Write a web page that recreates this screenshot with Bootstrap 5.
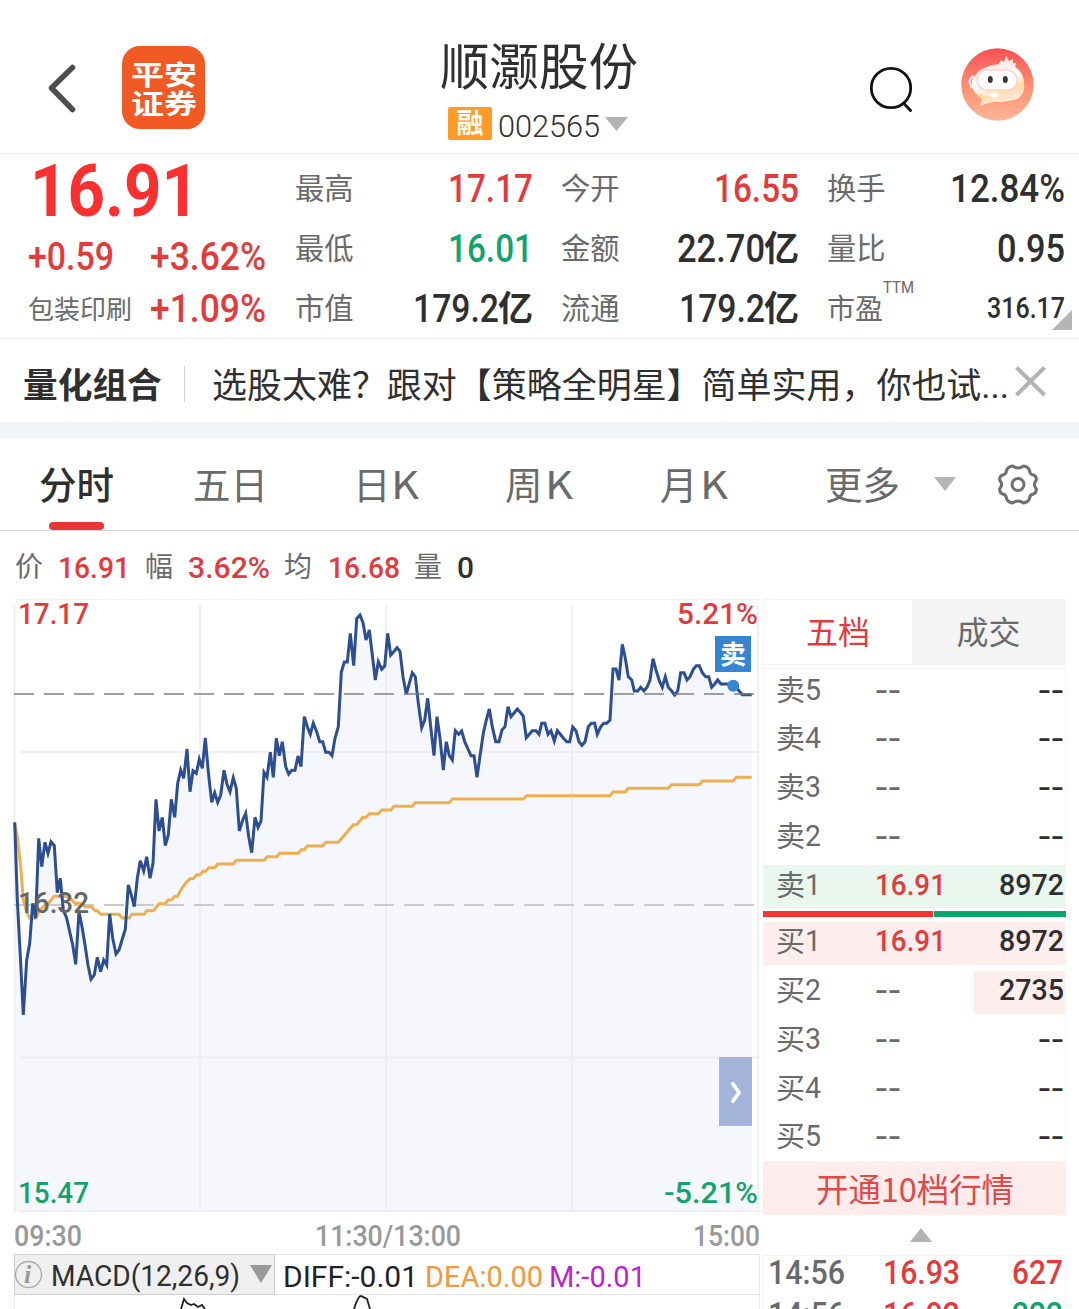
<!DOCTYPE html>
<html lang="zh-CN">
<head>
<meta charset="utf-8">
<meta name="viewport" content="width=device-width, initial-scale=1">
<title>顺灏股份 002565</title>
<link href="https://cdn.jsdelivr.net/npm/bootstrap@5.3.0/dist/css/bootstrap.min.css" rel="stylesheet">
<style>
:root{--up:#e23b3b;--down:#12a46c;--ink:#2f2f2f;--dim:#6a6a6a}
body{width:1079px;height:1309px;overflow:hidden;background:#fff;color:var(--ink);font-family:Roboto,"Noto Sans CJK SC",sans-serif;line-height:1;white-space:nowrap}
svg{display:block;flex:none}
.fit{display:inline-block;transform-origin:0 50%;font-weight:500;flex:none}
.w4{font-weight:400}
.w3{font-weight:300}
.w7{font-weight:700}
.up{color:var(--up)}.down{color:var(--down)}.dim{color:var(--dim)}
.cjk{font-family:"Noto Sans CJK SC",sans-serif}
.topbar{height:154px;border-bottom:1px solid #ececec}
.applogo{width:83px;height:83px;border-radius:18px;background:#f15a24;color:#fff;font:700 27px/29px "Noto Sans CJK SC",sans-serif;margin:46px 0 0 47px;padding:13px 0 0 9px}
.titlebox{width:300px;margin-left:184px;padding-top:37px}
.stockname{font-size:49.500px;line-height:54px}
.coderow{padding:13px 0 0 59px}
.code{font-family:Roboto;font-size:32px;line-height:33px;padding:6px 0 0 2px}
.marginbadge{width:44px;height:33px;border-radius:2px;background:#ff9b26;color:#fff;font-size:27px;line-height:30px;font-weight:700;text-align:center}
.quote{height:185px;border-bottom:1px solid #ececec}
.quote-left{width:295px;padding-left:28px}
.q1{height:75px}.q2{height:54px}.q3{height:51px}
.pair{width:266px;padding-right:28px;height:60px}
.pair.last{width:252px;padding-right:14px}
.lbl{font-size:29.300px;color:var(--dim);padding-bottom:2px}
.yi{font-size:35px;font-weight:700;padding-bottom:5px;margin-left:-1px}
.ttm{font-family:Roboto;font-size:17px;line-height:17px;margin-top:-14px}
.n38{font-size:38px;padding-top:1px}.n30{font-size:30px}.n34{font-size:34px}
.corner{width:20px;height:20px;right:7px;bottom:8px;background:#b5b5b5;clip-path:polygon(100% 0,100% 100%,0 100%)}
.promo{height:83px;padding-left:23px}
.promo-sep{width:1px;height:36px;background:#d0d0d0;margin:7px 27px 0 22px}
.gapband{height:17px;background:#f2f4f9}
.periods{height:92px;border-bottom:1px solid #d9d9d9;font-size:37.500px;color:var(--dim)}
.periods>.slot{height:91px;padding-bottom:3px}
.active-line{width:55px;height:8px;border-radius:4px;background:#e83535;left:49px;bottom:0}
.infoline{height:68px;padding:5px 0 0 15px;font-size:28px}
.infoline>.nm{padding-bottom:5px}
.infoline>.num{font-family:Roboto}
.leftcol{width:760px}
.chart{overflow:visible;margin-left:14px}
.axis{height:40px;padding:4px 0 0 14px;color:#999}
.macd{margin-left:14px;width:746px;height:41px;border:1px solid #e6e6e6}
.macd-name{width:261px;height:41px;margin:-1px 0 0 -1px;background:#efefef;border:1px solid #cfcfcf}
.book{width:303px;margin:68px 0 0 3px}
.booktabs{height:66px;border:1px solid #f3f3f3;font-size:32px}
.booktabs span{padding-bottom:4px}
.booktabs .tab-b{width:153px;background:#f4f4f4}
.ladder{border:1px solid #f5f5f5;border-top-color:#f0f0f0;margin-top:3px;height:494px;padding-top:1px}
.lv{height:43px;margin-bottom:5.75px;padding:0 1px 4px 12px}
.lv .nm{width:99px;font-size:29px;color:var(--dim)}
.lv .nm .cjk{padding-bottom:3px}
.lv .vol{margin-left:auto}
.lv .none{padding-top:2px}
.lv.s1{background:#eaf7ef}.lv.b1{background:#fdeeed}
.lv.b2{background:linear-gradient(90deg,transparent 210px,#fdeeed 210px)}
.balance{height:6px;gap:1px;margin:-3px -1px 5px}
.balance i{background:#f53434}.balance i+i{background:#08a66a}
.open10{height:53px;background:#fdeceb;color:#dd4a48;font-size:33px}
.ticks{height:54px;border:1px solid #f3f3f3;border-bottom:0;overflow:hidden;padding:0 2px 0 4px}
.ticks>div{height:42px;padding-bottom:10px}
</style>
<script src="https://cdn.jsdelivr.net/npm/bootstrap@5.3.0/dist/js/bootstrap.bundle.min.js"></script>
</head>
<body>
<header class="topbar d-flex">
  <svg width="75" height="153" viewBox="0 0 75 153" style="overflow:visible" fill="none" stroke="#4d4d4d" stroke-width="5.500" stroke-linecap="round" stroke-linejoin="round"><path d="M72.500 67.500 51.500 88 72.500 109.500"/></svg>
  <div class="applogo"><div><span class="fit w7" data-w="66">平安</span></div><div><span class="fit w7" data-w="66">证券</span></div></div>
  <div class="titlebox cjk">
    <div class="stockname text-center">顺灏股份</div>
    <div class="coderow d-flex align-items-center">
      <span class="marginbadge">融</span>
      <span class="fit w3 ms-1 code" data-w="104">002565</span>
      <svg class="ms-1" width="24" height="33" fill="#b3b3b3"><path d="M1 10H24L12.500 24Z"/></svg>
    </div>
  </div>
  <svg width="388" height="153" viewBox="689 0 388 153" fill="none">
    <defs>
      <linearGradient id="av" x2="0" y2="1"><stop stop-color="#f94f53"/><stop offset=".5" stop-color="#fb8e70"/><stop offset="1" stop-color="#ffb697"/></linearGradient>
      <linearGradient id="hd" x2=".4" y2="1"><stop stop-color="#ffe0d8"/><stop offset=".5" stop-color="#fff"/><stop offset=".75" stop-color="#ffdca5"/><stop offset="1" stop-color="#ffe9e2"/></linearGradient>
    </defs>
    <circle cx="891" cy="88" r="19.700" stroke="#111" stroke-width="2.800"/>
    <path d="M903.500 103 910.500 110.500" stroke="#111" stroke-width="3" stroke-linecap="round"/>
    <circle cx="997.500" cy="84.500" r="36.200" fill="url(#av)"/>
    <path d="M998 65 1001 60 1004 62 1006 56 1009 61 1013 59 1013 63 1016 63 1015 68Z" fill="#ffeae4"/>
    <path d="M978 72Q987 64 1004 64Q1019 65 1023 77Q1027 91 1019 98Q1012 102 994 102Q986 103 980 106L982 99Q970 91 972 80Z" fill="url(#hd)"/>
    <rect x="977" y="70" width="40" height="20" rx="10" fill="#fff" stroke="#ffd3ca" stroke-width="1.500"/>
    <ellipse cx="990.300" cy="79.500" rx="2.500" ry="3.600" fill="#3c3531"/><ellipse cx="1005.300" cy="79.500" rx="2.500" ry="3.600" fill="#3c3531"/>
    <path d="M974 76Q967 79 971 86Q978 94 993 95" stroke="#fff1eb" stroke-width="2.200"/>
    <rect x="990" y="92.500" width="9" height="5" rx="2.500" fill="#fff"/>
  </svg>
</header>

<section class="quote d-flex position-relative">
  <div class="quote-left">
    <div class="q1 d-flex align-items-center"><span class="fit" data-w="169" style="font-size:72px;font-weight:700;color:#f93030;margin-left:2px">16.91</span></div>
    <div class="q2 d-flex align-items-center up n38"><span class="fit" data-w="86">+0.59</span><span class="fit" data-w="116" style="margin-left:36px">+3.62%</span></div>
    <div class="q3 d-flex align-items-center up n38"><span class="dim cjk" style="font-size:26px;width:122px;padding-bottom:3px">包装印刷</span><span class="fit" data-w="116">+1.09%</span></div>
  </div>
  <div style="padding-top:4px">
    <div class="pair d-flex align-items-center justify-content-between"><span class="lbl cjk">最高</span><span class="fit n38 up" data-w="85">17.17</span></div>
    <div class="pair d-flex align-items-center justify-content-between"><span class="lbl cjk">最低</span><span class="fit n38 down" data-w="85">16.01</span></div>
    <div class="pair d-flex align-items-center justify-content-between"><span class="lbl cjk">市值</span><span class="d-flex align-items-center"><span class="fit n38" data-w="86">179.2</span><span class="cjk yi">亿</span></span></div>
  </div>
  <div style="padding-top:4px">
    <div class="pair d-flex align-items-center justify-content-between"><span class="lbl cjk">今开</span><span class="fit n38 up" data-w="85">16.55</span></div>
    <div class="pair d-flex align-items-center justify-content-between"><span class="lbl cjk">金额</span><span class="d-flex align-items-center"><span class="fit n38" data-w="88">22.70</span><span class="cjk yi">亿</span></span></div>
    <div class="pair d-flex align-items-center justify-content-between"><span class="lbl cjk">流通</span><span class="d-flex align-items-center"><span class="fit n38" data-w="86">179.2</span><span class="cjk yi">亿</span></span></div>
  </div>
  <div style="padding-top:4px">
    <div class="pair last d-flex align-items-center justify-content-between"><span class="lbl cjk">换手</span><span class="fit n38" data-w="115">12.84%</span></div>
    <div class="pair last d-flex align-items-center justify-content-between"><span class="lbl cjk">量比</span><span class="fit n38" data-w="68">0.95</span></div>
    <div class="pair last d-flex align-items-center justify-content-between"><span class="lbl cjk d-flex" style="font-size:28px">市盈<span class="fit w4 ttm" data-w="31">TTM</span></span><span class="fit n30" data-w="78">316.17</span></div>
  </div>
  <span class="corner position-absolute"></span>
</section>

<section class="promo d-flex align-items-center cjk">
  <b style="font-size:34.700px;padding-top:6px">量化组合</b><span class="promo-sep"></span>
  <span class="fit w4" data-w="797" style="font-size:35px;margin-top:8px">选股太难？跟对【策略全明星】简单实用，你也试<span style="font-family:Roboto">...</span></span>
  <svg class="ms-1" width="34" height="34" stroke="#b3b3b3" stroke-width="4"><path d="M3.500 3.500 31.500 31M31.500 3.500 3.500 31"/></svg>
</section>
<div class="gapband"></div>

<nav class="periods d-flex cjk position-relative">
  <span class="slot d-flex align-items-center" style="width:154px;padding-left:39px;color:var(--ink);font-weight:500">分时</span>
  <span class="slot d-flex align-items-center" style="width:160px;padding-left:39px">五日</span>
  <span class="slot d-flex align-items-center" style="width:152px;padding-left:39px">日<span class="fit w4" data-w="28">K</span></span>
  <span class="slot d-flex align-items-center" style="width:155px;padding-left:39px">周<span class="fit w4" data-w="28" style="margin-left:2px">K</span></span>
  <span class="slot d-flex align-items-center" style="width:203px;padding-left:39px">月<span class="fit w4" data-w="28" style="margin-left:2px">K</span></span>
  <span class="slot d-flex align-items-center" style="width:110px;padding-left:1px">更多</span>
  <svg width="64" height="91" fill="#b5b5b5"><path d="M0 38H22L11 52Z"/></svg>
  <svg width="40" height="91" viewBox="-20 -45.500 40 91" fill="none" stroke="#6f6f6f" stroke-width="3"><circle r="6"/><path stroke-linejoin="round" d="M-5.500-18.400Q0-14.600 5.500-18.400Q10.500-17.500 11.500-14Q11.700-10 15.500-9.500Q18.400-8.500 18.400-4.500Q14.500 0 18.400 4.500Q18.400 8.500 15.500 9.500Q11.700 10 11.500 14Q10.500 17.500 5.500 18.400Q0 14.600-5.500 18.400Q-10.500 17.500-11.500 14Q-11.700 10-15.500 9.500Q-18.400 8.500-18.400 4.500Q-14.500 0-18.400-4.500Q-18.400-8.500-15.500-9.500Q-11.700-10-11.500-14Q-10.500-17.500-5.500-18.400Z"/></svg>
  <span class="active-line position-absolute"></span>
</nav>

<main class="d-flex">
<div class="leftcol">
  <div class="infoline d-flex align-items-center cjk dim">
    <span class="nm" style="width:43px">价</span><span class="fit n30 up num" data-w="72">16.91</span>
    <span class="nm" style="width:58px;padding-left:15px">幅</span><span class="fit n30 up num" data-w="82">3.62%</span>
    <span class="nm" style="width:58px;padding-left:14px">均</span><span class="fit n30 up num" data-w="72">16.68</span>
    <span class="nm" style="width:57px;padding-left:14px">量</span><span class="fit n30 num" data-w="17" style="color:var(--ink)">0</span>
  </div>
  <svg class="chart" width="746" height="615" viewBox="14 599 746 615" font-family="Roboto" font-weight="500" font-size="30">
    <path id="area" fill="#f5f7fc"/>
    <path stroke="#e9eaef" stroke-opacity=".7" stroke-width="2" fill="none" d="M20 752H760M20 1057.500H760M20 1211H760M14.500 605V1212M200 605V1212M386 605V1212M572 605V1212M758 605V1212"/>
    <path stroke="#f3f3f3" d="M14 599.500H760"/>
    <path d="M14 905H754" stroke="#c9cacd" stroke-width="2" stroke-dasharray="20 10"/>
    <path id="avg" fill="none" stroke="#eeaf50" stroke-width="3"/>
    <path id="price" fill="none" stroke="#2d4f92" stroke-width="3"/>
    <path d="M14 694H754" stroke="#777" stroke-opacity=".7" stroke-width="2" stroke-dasharray="20 10"/>
    <text x="18" y="624" fill="#e23b3b" textLength="71" lengthAdjust="spacingAndGlyphs">17.17</text>
    <text x="677" y="624" fill="#e23b3b" textLength="81" lengthAdjust="spacingAndGlyphs">5.21%</text>
    <text x="18" y="913" fill="#666" textLength="71" lengthAdjust="spacingAndGlyphs">16.32</text>
    <text x="18" y="1203" fill="#12a46c" textLength="71" lengthAdjust="spacingAndGlyphs">15.47</text>
    <text x="664" y="1203" fill="#12a46c" textLength="94" lengthAdjust="spacingAndGlyphs">-5.21%</text>
    <rect x="715" y="636" width="36" height="36" fill="#3586d2"/>
    <text x="720" y="664" font-family="Noto Sans CJK SC" font-size="26" font-weight="700" fill="#fff">卖</text>
    <circle cx="733.300" cy="685.700" r="6" fill="#3586d2"/>
    <rect x="719" y="1057" width="33" height="69" fill="#a3b4da"/>
    <path d="M732 1082.500 739 1092.500 732 1102.500" fill="none" stroke="#fff" stroke-width="3.800"/>
  </svg>
  <div class="axis d-flex align-items-center" style="font-size:29px">
    <span class="fit" data-w="68">09:30</span><span class="fit" data-w="146" style="margin-left:233px">11:30/13:00</span><span class="fit" data-w="67" style="margin-left:232px">15:00</span>
  </div>
  <div class="macd d-flex align-items-center n30">
    <div class="macd-name d-flex align-items-center">
      <svg width="35" height="39" viewBox="14 0 35 39"><circle cx="27.500" cy="19.500" r="13" fill="none" stroke="#aaa" stroke-width="1.300"/><text x="23" y="28" font-family="Liberation Serif" font-style="italic" font-weight="700" font-size="26" fill="#999">i</text></svg>
      <span class="fit w4" data-w="189" style="padding-top:4px;margin-left:1px">MACD(12,26,9)</span>
      <svg width="34" height="39" fill="#999"><path d="M10 10H32L21 28Z"/></svg>
    </div>
    <span class="fit w4" data-w="135" style="margin-left:8px;padding-top:4px;color:#222">DIFF:-0.01</span>
    <span class="fit w4" data-w="118" style="margin-left:7px;padding-top:4px;color:#f0983c">DEA:0.00</span>
    <span class="fit w4" data-w="97" style="margin-left:6px;padding-top:4px;color:#bd22cc">M:-0.01</span>
  </div>
  <svg width="760" height="14" viewBox="0 1295 760 14" fill="none" stroke="#222" stroke-width="1.800"><path stroke="#eee" stroke-width="1" d="M14.500 1295V1309M759.500 1295V1309"/><path d="M181 1309 184 1299 187 1303 191 1305 194 1304 198 1307 202 1305 205 1309M354 1309Q358 1296 361 1296L367 1299 370 1309"/></svg>
</div>

<aside class="book">
  <div class="booktabs d-flex cjk"><span class="d-flex flex-fill align-items-center justify-content-center up">五档</span><span class="tab-b d-flex align-items-center justify-content-center dim">成交</span></div>
  <div class="ladder" id="ladder"></div>
  <div class="open10 d-flex align-items-center justify-content-center cjk"><span class="fit w4" data-w="198">开通10档行情</span></div>
  <svg width="303" height="40" fill="#b3b3b3"><path d="M147 27H169L158 13Z"/></svg>
  <div class="ticks" id="ticks"></div>
</aside>
</main>

<script>
// order book: label, price, volume, row class
const levels = [['卖5'],['卖4'],['卖3'],['卖2'],['卖1','16.91','8972','s1'],['买1','16.91','8972','b1'],['买2','','2735','b2'],['买3'],['买4'],['买5']];
document.getElementById('ladder').innerHTML = levels.map(([n,p,v,c],i) => `
  ${i===5?'<div class="balance d-flex"><i style="width:170px"></i><i class="flex-fill"></i></div>':''}
  <div class="lv d-flex align-items-center ${c||''}"><span class="nm d-flex align-items-center"><span class="cjk">${n[0]}</span><span class="fit w4 n30" data-w="16">${n[1]}</span></span>
  ${p?`<span class="fit n30 up" data-w="71">${p}</span>`:'<span class="fit n30 dim none" data-w="26">--</span>'}
  <span class="vol fit n30 ${v?'':'none'}" data-w="${v?65:26}">${v||'--'}</span></div>`).join('');
document.getElementById('ticks').innerHTML = [['14:56','16.93','627','up'],['14:56','16.92','222','down']].map(r => `
  <div class="d-flex align-items-center n34"><span class="fit dim" data-w="77">${r[0]}</span><span class="fit up" data-w="77" style="margin-left:38px">${r[1]}</span><span class="fit ms-auto ${r[3]}" data-w="51">${r[2]}</span></div>`).join('');

// intraday series in thirds of a pixel, in three blocks with their own x offset
const line = blocks => blocks.flatMap(([dx,s]) => s.split(' ').map(q => { const [x,y] = q.split(',').map(Number); return ((x+dx)/3).toFixed(1)+' '+(y/3+590).toFixed(1); })).join('L');
const price = line([
[0,'44,697 52,930 62,1120 70,1275 80,1110 89,1060 98,940 107,985 116,745 125,830 135,757 144,790 153,755 163,767 172,908 181,865 190,960 200,985 209,1025 218,1065 227,1123 237,965 246,1010 255,1065 264,1125 273,1168 283,1155 292,1102 302,1145 311,1110 320,1125 329,972 338,1045 348,1092 357,1080 366,1050 376,1018 385,885 394,915 403,950 412,865 421,812 431,843 440,800 450,865 459,820 468,628 477,723 487,682 496,767 505,735 514,628 524,682 533,580 542,540 551,565 561,477 570,605 579,542 589,550 598,508 607,535 616,444 625,545 635,637 644,608 653,637 662,615 672,541 681,583 690,605 700,563 709,595 718,723 728,690 737,670 746,740 755,788 765,682 774,712'],
[720,'63,693 72,547 81,562 91,487 100,562 109,445 118,497 127,455 137,530 146,552 155,541 165,541 174,498 183,530 193,380 202,410 211,433 220,400 230,425 239,455 248,455 257,487 267,487 276,497 285,445 295,410 304,247 313,216 322,216 331,130 341,227 350,86 360,75 369,98 378,150 388,120 397,195 406,270 415,215 425,238 434,228 443,130 452,195 461,185 471,173 480,184 489,260 499,313 508,280 517,248 526,260 535,340 545,413 554,390 563,325 572,410 582,497 591,380 600,445 610,540 619,455 628,497 637,510 646,422 656,433 665,423 674,455 684,477 693,497 702,497 711,562 720,498 730,430 739,390 748,357 757,410 767,455 777,455 786,420 795,410'],
[1470,'54,350 63,380 73,368 82,357 91,367 100,378 109,443 118,433 127,422 138,422 147,433 155,400 165,400 174,433 183,422 193,453 202,422 211,433 220,444 230,455 239,455 248,411 258,422 267,455 276,466 285,455 295,410 304,400 314,400 322,433 332,410 341,400 350,400 360,390 369,237 378,237 387,270 397,163 406,205 415,260 425,270 433,303 443,303 452,292 462,303 471,292 480,270 489,206 498,240 508,272 517,292 526,260 535,292 545,303 554,315 563,303 572,248 582,248 591,270 600,260 610,238 619,227 628,227 637,248 647,260 656,260 665,292 674,282 683,270 693,282 730,282 757,314 785,314']]);
const avg = line([
[0,'44,700 52,740 62,830 70,930 80,965 89,985 107,985 120,960 135,945 144,942 162,919 200,919 215,930 225,940 240,940 255,950 275,951 285,962 292,962 302,973 357,973 366,984 388,984 395,973 432,973 440,962 460,962 477,941 495,941 505,930 514,930 524,919 533,919 542,900 555,881 570,866 580,866 590,854 600,854 609,844 617,844 626,833 644,833 653,822 700,822 709,811'],
[720,'73,811 82,800 110,800 119,790 175,790 184,779 193,779 202,768 248,768 257,757 295,757 340,704 350,704 369,682 378,682 388,671 415,671 425,660 453,660 462,649 517,649 526,638 628,638 637,627'],
[1470,'100,627 110,617 360,617 369,606 406,606 415,595 535,595 545,584 628,584 637,573 730,573 739,562 785,562']]);
document.getElementById('price').setAttribute('d','M'+price);
document.getElementById('avg').setAttribute('d','M'+avg);
document.getElementById('area').setAttribute('d','M'+price+'V1212H14Z');

// condense each label to the width given in data-w and let the layout use that width
document.querySelectorAll('.fit').forEach(e => {
  const w = e.getBoundingClientRect().width, t = +e.dataset.w;
  e.style.transform = `scaleX(${t/w})`;
  e.style.marginRight = (t-w)+'px';
});
</script>
</body>
</html>
